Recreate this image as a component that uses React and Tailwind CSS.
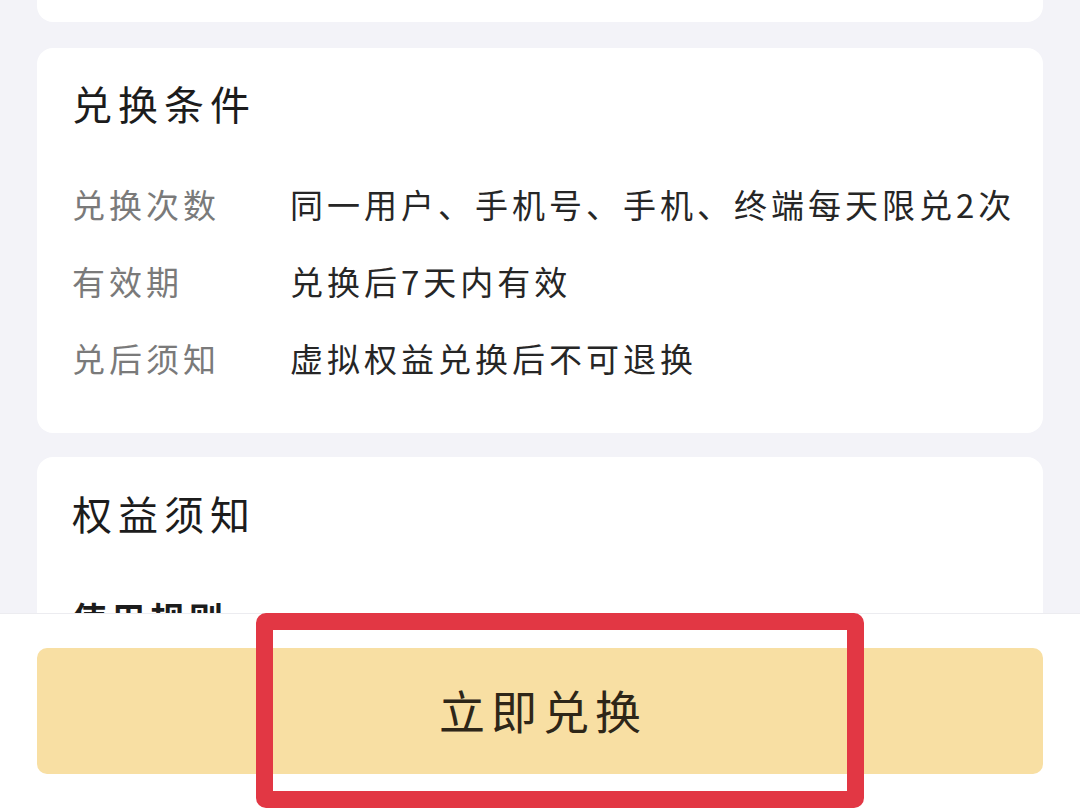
import React from "react";

const font = { fontFamily: '"Noto Sans CJK SC", "Noto Sans", sans-serif' };

function Row({ label, value }) {
  return (
    <div className="flex items-center h-[77px]">
      <div className="w-[218px] shrink-0 text-[33px] tracking-[4px] text-[#7a7a7a] leading-none">{label}</div>
      <div className="text-[33px] tracking-[4px] text-[#262626] leading-none whitespace-nowrap">{value}</div>
    </div>
  );
}

export default function App() {
  return (
    <div className="relative w-[1080px] h-[810px] overflow-hidden bg-[#f3f3f8]" style={font}>
      <div className="flex flex-col px-[37px]">
        <div className="h-[22px] bg-white rounded-b-[16px]" />
        <div className="mt-[26px] bg-white rounded-[16px] px-[35px] pt-[84px] pb-[36px] relative">
          <div className="absolute left-[35px] top-[35px] text-[40px] leading-none tracking-[6px] text-[#1c1c1c]">兑换条件</div>
          <div className="pt-[34px]">
            <Row label="兑换次数" value="同一用户、手机号、手机、终端每天限兑2次" />
            <Row label="有效期" value="兑换后7天内有效" />
            <Row label="兑后须知" value="虚拟权益兑换后不可退换" />
          </div>
        </div>
        <div className="mt-[24px] bg-white rounded-t-[16px] px-[35px] pt-[36px] h-[400px]">
          <div className="text-[40px] leading-none tracking-[6px] text-[#1c1c1c]">权益须知</div>
          <div className="mt-[68px] text-[34px] leading-none tracking-[5px] font-bold text-[#1c1c1c]">使用规则</div>
        </div>
      </div>

      <div className="absolute left-0 right-0 bottom-0 h-[197px] bg-white border-t border-[#ececf0] px-[37px] pt-[34px]">
        <div className="h-[126px] rounded-[10px] bg-[#f8dfa3] flex items-center justify-center">
          <span className="text-[46px] leading-none tracking-[6px] text-[#2e2618] pl-[6px] -mt-[4px]">立即兑换</span>
        </div>
      </div>

      <div className="absolute left-[256px] top-[613px] w-[608px] h-[195px] border-[17px] border-[#e23744] rounded-[10px]" />
    </div>
  );
}
